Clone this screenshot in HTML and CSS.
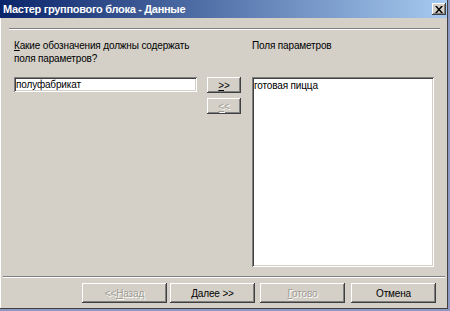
FILE: index.html
```html
<!DOCTYPE html>
<html lang="ru">
<head>
    <meta charset="UTF-8">
    <title>Мастер группового блока - Данные</title>
    <link rel="stylesheet" href="styles.css">
</head>
<body>
    <div class="window">
        <div class="titlebar">
            <span class="title">Мастер группового блока - Данные</span>
            <span class="close-btn">
                <svg width="8" height="7" viewBox="0 0 8 7">
                    <path d="M0 0h2l2 2.5L6 0h2L5 3.5 8 7H6L4 4.5 2 7H0l3-3.5z" fill="#000"/>
                </svg>
            </span>
        </div>
        <div class="rule top-rule"></div>

        <div class="main">
            <div class="left-col">
                <div class="label"><u>К</u>акие обозначения должны содержать<br>поля параметров?</div>
                <div class="pick-row">
                    <div class="field">полуфабрикат</div>
                    <div class="move-buttons">
                        <button class="btn small"><u>&gt;</u>&gt;</button>
                        <button class="btn small" disabled><u>&lt;</u>&lt;</button>
                    </div>
                </div>
            </div>
            <div class="right-col">
                <div class="label">Поля параметров</div>
                <div class="listbox">
                    <div class="item">готовая пицца</div>
                </div>
            </div>
        </div>

        <div class="rule bottom-rule"></div>
        <div class="footer">
            <button class="btn wide" disabled>&lt;&lt;<u>Н</u>азад</button>
            <button class="btn wide next"><u>Д</u>алее &gt;&gt;</button>
            <button class="btn wide finish" disabled><u>Г</u>отово</button>
            <button class="btn wide cancel">Отмена</button>
        </div>
    </div>
</body>
</html>
```

FILE: styles.css
```css
body {
    margin: 0;
    background-color: #8d97c2;
    font-family: "Liberation Sans", Arial, sans-serif;
    font-size: 10px;
    letter-spacing: -0.15px;
    color: #000;
}
.window {
    width: 447px;
    height: 308px;
    background-color: #d4d0c8;
    border-right: 1px solid #404040;
    border-bottom: 1px solid #404040;
    box-shadow: inset 2px 0 0 -1px #fff;
    overflow: hidden;
}
.titlebar {
    height: 18px;
    display: flex;
    align-items: center;
    justify-content: space-between;
    padding: 0 1px 0 3px;
    background: linear-gradient(to right, #0a246a, #a6caf0);
}
.title {
    color: #fff;
    font-weight: bold;
    font-size: 11px;
    letter-spacing: -0.3px;
}
.close-btn {
    width: 14px;
    height: 12px;
    display: flex;
    align-items: center;
    justify-content: center;
    background-color: #d4d0c8;
    box-shadow: inset -1px -1px #404040, inset 1px 1px #fff, inset -2px -2px #808080;
}
.rule {
    height: 1px;
    background-color: #808080;
    border-bottom: 1px solid #fff;
}
.top-rule {
    margin: 10px 7px 0 9px;
}
.main {
    display: flex;
    gap: 11px;
    margin-top: 9px;
    padding-left: 14px;
}
.left-col {
    width: 227px;
}
.label {
    line-height: 13px;
    white-space: nowrap;
}
.pick-row {
    display: flex;
    gap: 10px;
    margin-top: 12px;
}
.field {
    width: 179px;
    height: 15px;
    padding: 0 2px;
    line-height: 15px;
    background-color: #fff;
    box-shadow: inset 1px 1px #808080, inset -1px -1px #fff, inset 2px 2px #404040, inset -2px -2px #d4d0c8;
}
.move-buttons {
    display: flex;
    flex-direction: column;
    gap: 5px;
}
.btn {
    font-family: "Liberation Sans", Arial, sans-serif;
    font-size: 10px;
    letter-spacing: -0.15px;
    color: #000;
    background-color: #d4d0c8;
    border: none;
    padding: 0;
    box-shadow: inset -1px -1px #404040, inset 1px 1px #fff, inset -2px -2px #808080, inset 2px 2px #d4d0c8;
}
.btn:disabled {
    color: #a09c94;
    text-shadow: 1px 1px 0 #fff;
}
.btn.small {
    width: 34px;
    height: 16px;
}
.right-col {
    width: 182px;
}
.listbox {
    margin-top: 25px;
    height: 186px;
    padding: 2px;
    background-color: #fff;
    box-shadow: inset 1px 1px #808080, inset -1px -1px #fff, inset 2px 2px #404040, inset -2px -2px #d4d0c8;
}
.item {
    line-height: 13px;
}
.bottom-rule {
    margin: 9px 2px 0 3px;
}
.footer {
    display: flex;
    margin-top: 5px;
    padding-left: 82px;
}
.btn.wide {
    width: 85px;
    height: 20px;
}
.next {
    margin-left: 3px;
}
.finish {
    margin-left: 5px;
}
.cancel {
    margin-left: 6px;
}
```
